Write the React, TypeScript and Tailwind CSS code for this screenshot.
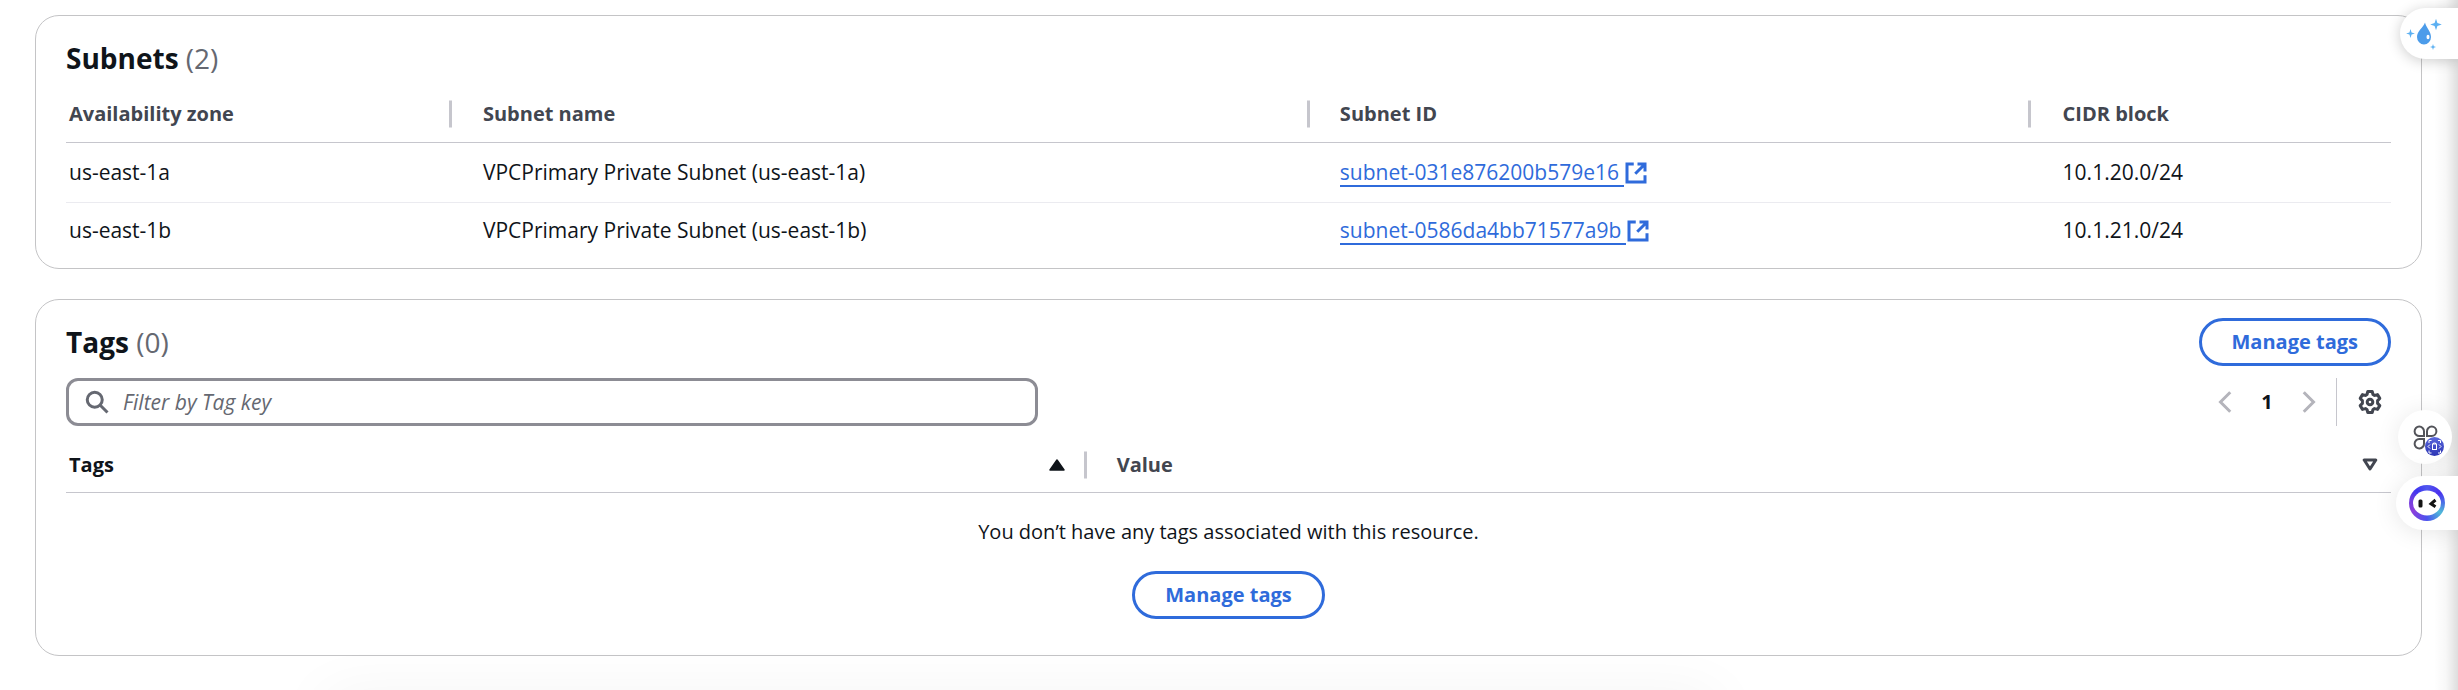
import React from "react";

const subnets = [
  { zone: "us-east-1a", name: "VPCPrimary Private Subnet (us-east-1a)", id: "subnet-031e876200b579e16", cidr: "10.1.20.0/24" },
  { zone: "us-east-1b", name: "VPCPrimary Private Subnet (us-east-1b)", id: "subnet-0586da4bb71577a9b", cidr: "10.1.21.0/24" },
];

function ExternalIcon() {
  return (
    <svg viewBox="0 0 16 16" className="size-6 shrink-0" fill="none" stroke="currentColor" strokeWidth="2" aria-hidden="true">
      <path d="M9 2h5v5M7.500 8.500 13.500 2.500M14 9.500V14H2V2h4.500" />
    </svg>
  );
}

function SearchIcon() {
  return (
    <svg viewBox="0 0 16 16" className="size-6 shrink-0 text-[#656871]" fill="none" stroke="currentColor" strokeWidth="2" aria-hidden="true">
      <circle cx="6.500" cy="6.500" r="5" />
      <path d="m10 10 5 5" />
    </svg>
  );
}

function ChevronIcon({ d }: { d: string }) {
  return (
    <svg viewBox="0 0 16 16" className="size-6" fill="none" stroke="currentColor" strokeWidth="2" aria-hidden="true">
      <path d={d} />
    </svg>
  );
}

function GearIcon() {
  return (
    <svg viewBox="0 0 24 24" className="size-6" fill="none" stroke="currentColor" strokeWidth="3" strokeLinejoin="round" aria-hidden="true">
      <path d="M9.800 1.500h4.400l.8 3 1.500.9 3-.8 2.300 3.800-2.200 2.200v2.800l2.200 2.200-2.300 3.800-3-.8-1.500.9-.8 3H9.800l-.8-3-1.500-.9-3 .8-2.300-3.800 2.200-2.200v-2.800L2.200 8.400l2.300-3.800 3 .8L9 4.500z" />
      <circle cx="12" cy="12" r="2.800" />
    </svg>
  );
}

function ManageButton() {
  return (
    <button type="button" className="h-12 rounded-full border-3 border-[#2f6bdb] bg-white px-[30px] text-xl font-bold whitespace-nowrap text-[#2f6bdb]">
      Manage tags
    </button>
  );
}

function Divider() {
  return <span className="absolute top-1/2 right-0 h-[27px] w-[3px] -translate-y-1/2 bg-[#c6c6cd]" aria-hidden="true" />;
}

function Sparkle({ x, y, r }: { x: number; y: number; r: number }) {
  const q = r * 0.24;
  return (
    <path
      fill="#5cb0f2"
      d={`M${x} ${y - r}L${x + q} ${y - q}L${x + r} ${y}L${x + q} ${y + q}L${x} ${y + r}L${x - q} ${y + q}L${x - r} ${y}L${x - q} ${y - q}Z`}
    />
  );
}

function FloatingTools() {
  return (
    <>
      <div className="pointer-events-none absolute inset-y-0 right-0 w-6 bg-linear-to-l from-black/13 via-black/3 to-transparent" />
      <button type="button" aria-label="Assistant" className="absolute top-2 right-0 h-[51px] w-[58px] rounded-l-full bg-white shadow-[0_2px_14px_rgba(0,0,0,0.2)]">
        <svg viewBox="0 0 58 51" className="h-[51px] w-[58px]" aria-hidden="true">
          <path fill="#4c9cea" d="M25 14.500c1 5 6 9 6 14.500a7 7.500 0 0 1-14 0c0-6 6-9 8-14.500z" />
          <ellipse cx="28" cy="29" rx="1.500" ry="2.200" fill="#fff" />
          <Sparkle x={36} y={16.5} r={5.8} />
          <Sparkle x={10.5} y={25.5} r={4.4} />
          <Sparkle x={33} y={39} r={3} />
        </svg>
      </button>
      <button type="button" aria-label="Apps" className="absolute top-[410px] right-[6px] size-[54px] rounded-full bg-white shadow-[0_2px_24px_rgba(0,0,0,0.09)]">
        <svg viewBox="0 0 54 54" className="size-[54px]" aria-hidden="true">
          <defs>
            <linearGradient id="badge" x1="0" y1="0" x2="0" y2="1">
              <stop offset="0" stopColor="#5a68dc" />
              <stop offset="1" stopColor="#2c35b4" />
            </linearGradient>
          </defs>
          <g fill="none" stroke="#53545a" strokeWidth="2">
            <path d="M26 26h-4.500a4.700 4.700 0 1 1 4.500-4.700z" />
            <path d="M29 26v-4.700a4.700 4.700 0 1 1 4.700 4.700z" />
            <path d="M26 29v4.300a4.700 4.700 0 1 1-4.700-4.300z" />
          </g>
          <circle cx="36.500" cy="36.500" r="9.500" fill="url(#badge)" />
          <g fill="none" stroke="#fff" strokeWidth="1">
            <rect x="34.500" y="34" width="4" height="5.500" />
            <path d="M35.500 34v-1h2v1M32 34.500l-2 2 2 2M41 34.500l2 2-2 2M31 33v-2.500h2.500M40 30.500h2.500V33M31 40.500V43h2.500M40 43h2.500v-2.500" />
          </g>
        </svg>
      </button>
      <button type="button" aria-label="Chat" className="absolute top-[476px] right-0 flex h-[54px] w-[62px] items-center rounded-l-full bg-white pl-[13px] shadow-[0_2px_24px_rgba(0,0,0,0.1)]">
        <span className="flex size-9 items-center justify-center rounded-full bg-[conic-gradient(#5058ee,#4a2fee_50deg,#4b6ae8_85deg,#4fb9d8_125deg,#4a52ee_180deg,#8c3fdc_240deg,#7440e0_280deg,#3f35f0_320deg,#5058ee)]">
          <svg viewBox="0 0 28 26" className="h-[26px] w-7" aria-hidden="true">
            <ellipse cx="14" cy="13" rx="14" ry="12.500" fill="#fff" />
            <rect x="5.500" y="9.500" width="4" height="8" rx="1.500" fill="#141414" />
            <path d="m22.500 10-4.500 3.800 4.500 3" fill="none" stroke="#141414" strokeWidth="3" />
          </svg>
        </span>
      </button>
    </>
  );
}

export default function App() {
  return (
    <div className="relative min-h-screen overflow-hidden bg-white font-['Open_Sans','Noto_Sans',sans-serif] text-[21px] leading-[30px] text-[#0f141a]">
      <main className="flex flex-col gap-[30px] pt-[15px] pr-9 pl-[35px]">
        <section className="rounded-3xl border border-[#c4c4c6] px-[30px] pt-[25px] pb-[10px]">
          <h2 className="text-[28px] leading-[34px] font-bold">
            Subnets <span className="font-normal text-[#656871]">(2)</span>
          </h2>
          <table className="mt-3 w-full table-fixed border-collapse text-left">
            <colgroup>
              <col className="w-[16.6%]" />
              <col className="w-[36.9%]" />
              <col className="w-[31%]" />
              <col />
            </colgroup>
            <thead>
              <tr className="h-[55px] border-b border-[#c6c6cd] text-xl text-[#424650]">
                <th className="relative pl-[3px] font-bold">Availability zone<Divider /></th>
                <th className="relative pl-[31px] font-bold">Subnet name<Divider /></th>
                <th className="relative pl-[30px] font-bold">Subnet ID<Divider /></th>
                <th className="pl-8 font-bold">CIDR block</th>
              </tr>
            </thead>
            <tbody>
              {subnets.map((s) => (
                <tr key={s.id} className="h-[60px] border-b border-[#ebebf0] last:h-14 last:border-0">
                  <td className="pl-[3px]">{s.zone}</td>
                  <td className="pl-[31px]">{s.name}</td>
                  <td className="pl-[30px]">
                    <a href="#subnet" className="inline-flex items-center text-[#2f6bdb]">
                      <span className="border-b-2 border-[#2f6bdb] pr-[5px] leading-[26px]">{s.id}</span>
                      <ExternalIcon />
                    </a>
                  </td>
                  <td className="pl-8">{s.cidr}</td>
                </tr>
              ))}
            </tbody>
          </table>
        </section>

        <section className="rounded-3xl border border-[#c4c4c6] px-[30px] pt-[18px] pb-9">
          <div className="flex items-center justify-between">
            <h2 className="text-[28px] leading-[34px] font-bold">
              Tags <span className="font-normal text-[#656871]">(0)</span>
            </h2>
            <ManageButton />
          </div>
          <div className="mt-3 flex items-center justify-between">
            <label className="flex h-12 w-[41.8%] items-center gap-[14px] rounded-xl border-3 border-[#8c8c94] px-4">
              <SearchIcon />
              <input type="search" aria-label="Filter by Tag key" placeholder="Filter by Tag key" className="min-w-0 flex-1 bg-transparent outline-none placeholder:text-[#656871] placeholder:italic" />
            </label>
            <div className="flex h-12 items-center">
              <button type="button" aria-label="Previous page" className="text-[#b4b4bb]"><ChevronIcon d="m11.500 1.500-6.500 6.500 6.500 6.500" /></button>
              <button type="button" className="w-[60px] text-xl font-bold">1</button>
              <button type="button" aria-label="Next page" className="text-[#b4b4bb]"><ChevronIcon d="m4.500 1.500 6.500 6.500-6.500 6.500" /></button>
              <span className="mr-[21px] ml-[15px] h-12 w-px bg-[#c6c6cd]" aria-hidden="true" />
              <button type="button" aria-label="Preferences" className="mr-[9px] text-[#424650]"><GearIcon /></button>
            </div>
          </div>
          <table className="mt-3 w-full table-fixed border-collapse text-left">
            <colgroup>
              <col className="w-[43.9%]" />
              <col />
            </colgroup>
            <thead>
              <tr className="h-[54px] border-b border-[#c6c6cd] text-xl">
                <th className="relative pl-[3px] font-bold">
                  <div className="flex items-center justify-between pr-[22px]">
                    Tags
                    <svg viewBox="0 0 16 12" className="h-3 w-4" aria-hidden="true"><path d="M8 1 15 11H1z" fill="#0f141a" stroke="#0f141a" strokeWidth="1.500" strokeLinejoin="round" /></svg>
                  </div>
                  <Divider />
                </th>
                <th className="pl-[30px] font-bold text-[#424650]">
                  <div className="flex items-center justify-between pr-[13px]">
                    Value
                    <svg viewBox="0 0 16 13" className="h-[13px] w-4" aria-hidden="true"><path d="M2.200 2h11.600L8 11z" fill="none" stroke="#424650" strokeWidth="3" strokeLinejoin="round" /></svg>
                  </div>
                </th>
              </tr>
            </thead>
            <tbody>
              <tr>
                <td colSpan={2}>
                  <div className="flex flex-col items-center gap-6 pt-6">
                    <p className="text-[20px] leading-[30px] font-medium">You don’t have any tags associated with this resource.</p>
                    <ManageButton />
                  </div>
                </td>
              </tr>
            </tbody>
          </table>
        </section>
      </main>
      <div className="pointer-events-none absolute top-full right-[30%] left-[13%] h-10 rounded-3xl shadow-[0_6px_60px_rgba(0,0,0,0.06)]" />
      <FloatingTools />
    </div>
  );
}
